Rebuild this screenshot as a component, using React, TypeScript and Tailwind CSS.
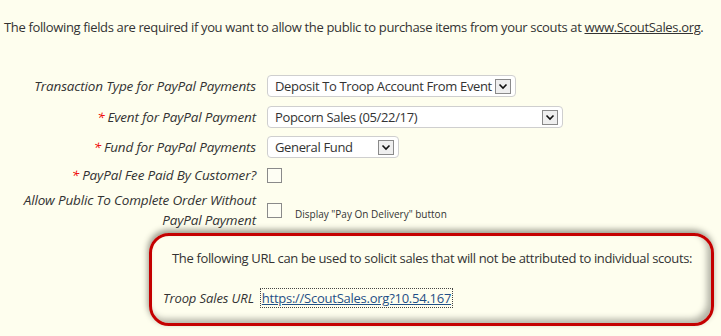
import React from 'react';

interface FieldRow {
  label: string;
  required?: boolean;
  value: string;
  width: string;
}

const selects: FieldRow[] = [
  { label: 'Transaction Type for PayPal Payments', value: 'Deposit To Troop Account From Event', width: 'w-[249px]' },
  { label: 'Event for PayPal Payment', required: true, value: 'Popcorn Sales (05/22/17)', width: 'w-[296px]' },
  { label: 'Fund for PayPal Payments', required: true, value: 'General Fund', width: 'w-[132px]' },
];

function Chevron() {
  return (
    <svg width="10" height="7" viewBox="0 0 10 7" className="block">
      <path d="M1.5 1.5 L5 5 L8.5 1.5" fill="none" stroke="#111" strokeWidth="1.6" />
    </svg>
  );
}

function FakeSelect({ value, width }: { value: string; width: string }) {
  return (
    <div
      className={`flex h-[22px] items-center justify-between rounded-[4px] border border-[#cfcfcf] bg-white pr-[4px] pl-[7px] ${width}`}
    >
      <span className="whitespace-nowrap">{value}</span>
      <span className="flex h-[15px] w-[16px] shrink-0 items-center justify-center border border-[#8a8a8a] bg-[#efefef]">
        <Chevron />
      </span>
    </div>
  );
}

function Label({ text, required }: { text: string; required?: boolean }) {
  return (
    <div className="w-[267px] shrink-0 pr-[11px] text-right text-[13.5px] tracking-[-0.15px] italic">
      {required && <span className="mr-[3px] text-[#e00]">*</span>}
      {text}
    </div>
  );
}

function Checkbox() {
  return <span className="block h-[15px] w-[15px] border border-[#8a8a8a] bg-[#fefef4]" />;
}

export default function App() {
  return (
    <div className="h-[336px] w-[721px] overflow-hidden bg-[#fefeee] font-['Open_Sans',sans-serif] text-[13px] leading-[18px] tracking-[-0.35px] text-[#333]">
      <p className="pt-[18px] pl-[4px] whitespace-nowrap">
        The following fields are required if you want to allow the public to purchase items from your scouts at{' '}
        <a className="underline">www.ScoutSales.org</a>.
      </p>

      <div className="mt-[39px]">
        {selects.map((row, i) => (
          <div key={row.label} className={`flex items-center ${i === 0 ? '' : i === 1 ? 'mt-[9px]' : 'mt-[8px]'}`}>
            <Label text={row.label} required={row.required} />
            <FakeSelect value={row.value} width={row.width} />
          </div>
        ))}

        <div className="mt-[6px] flex h-[22px] items-center">
          <Label text="PayPal Fee Paid By Customer?" required />
          <Checkbox />
        </div>

        <div className="mt-[4px] flex items-center leading-[20px]">
          <Label text="Allow Public To Complete Order Without PayPal Payment" />
          <Checkbox />
          <span className="mt-[7px] ml-[13px] text-[10px] tracking-normal">Display "Pay On Delivery" button</span>
        </div>
      </div>

      <div className="mt-[3px] mr-[7px] ml-[149px] h-[93px] rounded-[20px] border-[3px] border-[#c40000] pt-[13px] shadow-[-1px_-3px_6px_#969688,inset_-4px_-4px_6px_#b3b3a6]">
        <p className="pl-[20px] whitespace-nowrap">
          The following URL can be used to solicit sales that will not be attributed to individual scouts:
        </p>
        <div className="mt-[22px] flex items-center pl-[11px]">
          <span className="italic tracking-[-0.1px]">Troop Sales URL</span>
          <a className="ml-[7px] px-[1px] tracking-[-0.25px] text-[#1f4f86] underline outline-1 outline-[#444] outline-dotted">
            https://ScoutSales.org?10.54.167
          </a>
        </div>
      </div>
    </div>
  );
}
